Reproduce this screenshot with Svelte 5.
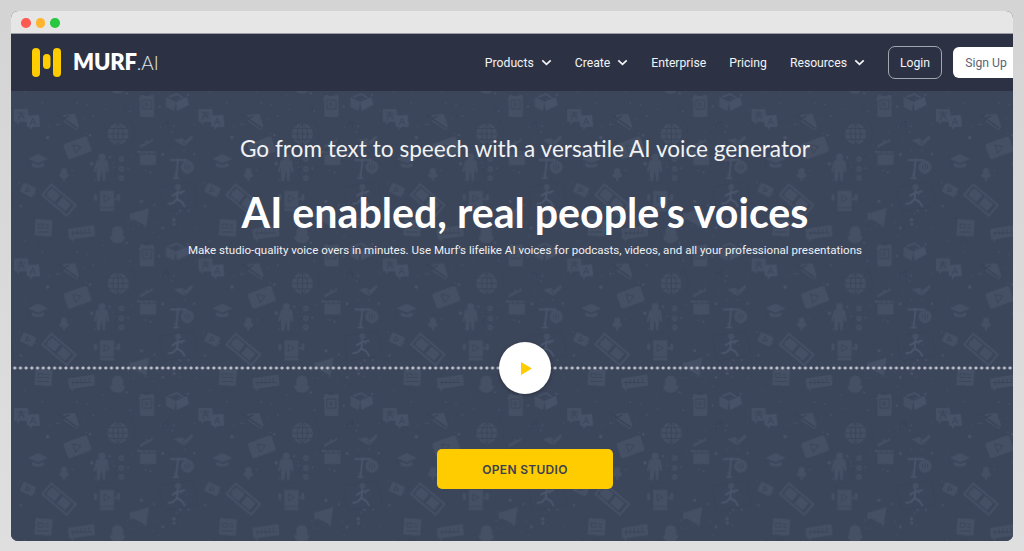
<script>
  const TW = 184.4;
  const TH = 149.5;
  const offsets = [[0, 0], [-TW, 0], [0, -TH], [-TW, -TH]];
  // pseudo random scatter of specks across the tile
  const specks = [];
  let s = 7;
  const rnd = () => ((s = (s * 16807) % 2147483647) / 2147483647);
  for (let i = 0; i < 95; i++) {
    specks.push({ x: +(rnd() * TW).toFixed(1), y: +(rnd() * TH).toFixed(1), r: +(0.5 + rnd() * rnd() * 1.3).toFixed(2) });
  }
  const navItems = [
    { label: 'Products', caret: true },
    { label: 'Create', caret: true },
    { label: 'Enterprise', caret: false },
    { label: 'Pricing', caret: false },
    { label: 'Resources', caret: true }
  ];
</script>

<div class="page">
  <div class="window">
    <div class="chrome">
      <span class="dot red"></span>
      <span class="dot amber"></span>
      <span class="dot green"></span>
    </div>

    <header class="header">
      <div class="logo">
        <svg class="mark" width="29" height="29" viewBox="0 0 29 29" aria-hidden="true">
          <rect class="mark-bar" x="0" y="0" width="8" height="29" rx="4" />
          <rect class="mark-bar" x="11" y="6" width="7.5" height="15" rx="3.7" />
          <rect class="mark-bar" x="21" y="0" width="8" height="29" rx="4" />
        </svg>
        <span class="wordmark"><b>MURF</b><i>.AI</i></span>
      </div>
      <nav class="nav">
        {#each navItems as item}
          <a class="nav-item" href="#top">
            {item.label}
            {#if item.caret}
              <svg class="caret" width="11" height="7" viewBox="0 0 11 7" aria-hidden="true">
                <path d="M1.3 1.3 5.500 5.300 9.700 1.300" />
              </svg>
            {/if}
          </a>
        {/each}
        <button class="login">Login</button>
        <button class="signup">Sign Up</button>
      </nav>
    </header>

    <main class="hero">
      <svg class="pattern" width="100%" height="100%" aria-hidden="true">
        <defs>
          <g id="tile">
            {#each specks as d}
              <circle class="speck" cx={d.x} cy={d.y} r={d.r} />
            {/each}

            <!-- translate bubbles -->
            <path class="ic" d="M3 18h13a1 1 0 0 1 1 1l1 11a1 1 0 0 1-1 1H9l-3 3v-3H4a1 1 0 0 1-1-1z" />
            <path class="ln" d="M6 22h8M10 20v2M7 29l3-7 3 6M7 25h6" />
            <path class="ic2" d="M15 25l12-1a1 1 0 0 1 1 1l1 10a1 1 0 0 1-1 1h-6l-3 3v-3h-2a1 1 0 0 1-1-1z" />
            <path class="ln" d="M19 34l3-7 3 7M20 31.500h4" />

            <!-- pen and pad -->
            <path class="ic" d="M52 24l12-1 4 12-2 4-13-8z" />
            <path class="ln thick" d="M46 23l20 14M53 27l5-2" />

            <!-- video card -->
            <g transform="rotate(-20 66 57)">
              <rect class="ic" x="54" y="49" width="25" height="16" rx="2" />
              <path class="ln" d="M63 52.500l7 4.500-7 4.500z" />
            </g>

            <!-- graduation cap -->
            <path class="ic" d="M17 68l10-5 10 5-10 4z" />
            <path class="ic" d="M21 72l6 2 6-2v3c-2 2-10 2-12 0z" />
            <path class="ln" d="M17 68v9" />

            <!-- small mic -->
            <rect class="ic" x="50" y="77" width="6" height="9" rx="3" />
            <path class="ic" d="M48 83h10c0 3-2 4-4 4v3h-2v-3c-2 0-4-1-4-4z" />

            <!-- small video -->
            <g transform="rotate(25 17 99)">
              <rect class="ic" x="10" y="94" width="14" height="10" rx="1.500" />
              <path class="ln" d="M15 96.500l4 2.500-4 2.500z" />
            </g>

            <!-- film strip -->
            <g transform="rotate(40 48 109)">
              <rect class="film" x="32" y="102" width="32" height="14" />
              <rect class="ic" x="35" y="104.500" width="11" height="9" />
              <rect class="ic" x="49" y="104.500" width="11" height="9" />
            </g>

            <!-- headphone book -->
            <path class="ln" d="M85 104c0-16 22-16 22 0" />
            <rect class="ic" x="83" y="103" width="3" height="7" rx="1.500" />
            <rect class="ic" x="106" y="103" width="3" height="7" rx="1.500" />
            <rect class="ic" x="89" y="100" width="14" height="16" rx="1" />
            <rect class="ic" x="89" y="117" width="14" height="3" />
            <path class="ln" d="M93 104l6 3.500-6 3.500z" />

            <!-- runner on screen -->
            <g transform="rotate(-10 167 106)">
              <rect class="ln" x="150" y="93" width="35" height="25" rx="1" />
            </g>
            <circle class="ic" cx="167" cy="96" r="3" />
            <path class="limb" d="M167 99l-1 9M166 102l8-2M166 102l-5 3M166 108l5 3 3 5M166 108l-4 4-5 1" />

            <!-- megaphone -->
            <path class="ic" d="M122 122l16-5-3 18-13-7z" />
            <rect class="ic" x="119" y="122" width="3" height="7" />

            <!-- presentation board -->
            <rect class="ic" x="24" y="128" width="17" height="17" transform="rotate(4 32 137)" />
            <path class="ln" d="M22 127l20 2M27 133h5v4h-5zM34 134h4M34 137h4M26 141h12M31 146l-4 8M33 146l3 8" />

            <!-- waveform bubble -->
            <path class="ic" d="M57 138l26-4 1 11-21 3-2 3-1-3h-2z" />
            <path class="ln" d="M62 140v5M66 139v5M70 138v6M74 138v5M78 137v4M60 142h21" />

            <!-- large mic -->
            <rect class="ic" x="101" y="135" width="11" height="14" rx="5.500" />
            <path class="ic" d="M99 145h15c0 4-3 7-6 7h-3c-3 0-6-3-6-7z" />

            <!-- phone -->
            <rect class="ic" x="129" y="4" width="14" height="22" rx="1.500" />
            <path class="ln" d="M133 2.500h6v2h-6z" />
            <rect class="ln" x="131.500" y="9" width="9" height="9" />
            <path class="ln" d="M134.500 11.500l3 2-3 2z" />

            <!-- book blocks -->
            <path class="thick2" d="M158 6l8-3 6 4" />
            <path class="ic" d="M155 6l10 5-2 9-8-4z" />
            <path class="ic2" d="M165 11l11-5 2 8-12 6z" />

            <!-- pin and note -->
            <path class="ln" d="M115 14c-3 0-3 4 0 7 3-3 3-7 0-7z" />
            <path class="ln thick" d="M151 35l6-5M157 30v7M151 35v4" />

            <!-- globe -->
            <circle class="ic" cx="107" cy="43" r="10.500" />
            <path class="ln globe" d="M96.500 43h21M98 37.500h18M98 48.500h18M107 32.500v21M107 32.500c-7 6-7 15 0 21M107 32.500c7 6 7 15 0 21" />
            <path class="ln" d="M120 30c6 10 5 20-3 27M118 31l2-2 1 3" />

            <!-- person and options -->
            <circle class="ic" cx="91" cy="66" r="3.500" />
            <path class="ic" d="M85 71c0-2 2-2 3-2h6c2 0 3 1 3 3l1 9h-2l-1-5-1 14h-2l-1-9h-1l-1 9h-3l-.5-14-1 5h-2z" />
            <path class="ln" d="M107 68c-3 0-3 2-3 4v12c0 2 1 3 3 3M104 78h3" />
            <circle class="ic dark-ring" cx="110.500" cy="68" r="3.200" />
            <circle class="ic dark-ring" cx="110.500" cy="78" r="3.200" />
            <circle class="ic dark-ring" cx="110.500" cy="87" r="3.200" />
            <path class="ln" d="M109 68h3M109 78h3M109 87h3" />

            <!-- clapper -->
            <path class="ic" d="M129 54l11-5 1-2 1 3-13 7z" />
            <rect class="ic" x="129" y="60" width="16" height="14" />
            <path class="ln" d="M129 59h16M129 63h16M132 60l2 3M137 60l2 3M142 60l2 3" />

            <!-- T with bubble -->
            <path class="t" d="M159 69h17M167 69l-2 18M162 87h6" />
            <circle class="ic" cx="176.500" cy="76" r="6.500" />
            <path class="ln" d="M174 74v4M176.500 72.500v7M179 74v4" />

            <!-- open book -->
            <path class="ic" d="M163 49l8-2 3 3 7-6 1 3-8 8-3-1z" />
            <path class="ln" d="M172 50l2 4" />
          </g>
          <pattern id="doodles" width={TW} height={TH} patternUnits="userSpaceOnUse">
            {#each offsets as o}
              <use href="#tile" x={o[0]} y={o[1]} />
            {/each}
            <use href="#tile" x={TW} y="0" />
            <use href="#tile" x="0" y={TH} />
          </pattern>
        </defs>
        <rect width="100%" height="100%" fill="url(#doodles)" />
      </svg>

      <h2 class="lead">Go from text to speech with a versatile AI voice generator</h2>
      <h1 class="title">AI enabled, real people's voices</h1>
      <p class="copy">Make studio-quality voice overs in minutes. Use Murf's lifelike AI voices for podcasts, videos, and all your professional presentations</p>

      <div class="player">
        <button class="play" aria-label="Play">
          <svg width="11" height="13" viewBox="0 0 11 13" aria-hidden="true"><path class="play-tri" d="M0 0 11 6.500 0 13z" /></svg>
        </button>
      </div>

      <button class="cta">OPEN STUDIO</button>
    </main>
  </div>
</div>

<style>
  :global(body) {
    margin: 0;
    overflow: hidden;
  }
  .page {
    height: 551px;
    box-sizing: border-box;
    padding: 11px 11px 10px;
    background: linear-gradient(#d4d4d4, #dfdfdf);
    font-family: "Roboto", "Inter", sans-serif;
  }
  .window {
    height: 100%;
    display: flex;
    flex-direction: column;
    border-radius: 7px;
    overflow: hidden;
    background: #3c4559;
  }
  .chrome {
    flex: 0 0 23px;
    box-sizing: border-box;
    padding: 7px 0 0 10px;
    display: flex;
    gap: 5px;
    background: #e6e6e6;
    border-bottom: 1px solid #9a9da3;
  }
  .dot {
    width: 9.500px;
    height: 9.500px;
    border-radius: 50%;
  }
  .red { background: #ff5a52; }
  .amber { background: #ffb52e; }
  .green { background: #27c83f; }

  .header {
    flex: 0 0 57px;
    display: flex;
    align-items: center;
    padding-left: 21px;
    background: #2c3244;
  }
  .logo {
    display: flex;
    align-items: center;
    gap: 12px;
    margin-top: -1px;
  }
  .mark-bar { fill: #ffcc00; }
  .wordmark {
    font-family: "Lato", sans-serif;
    color: #fff;
    line-height: 1;
  }
  .wordmark b { font-size: 22px; font-weight: 800; letter-spacing: -0.2px; }
  .wordmark i { font-size: 19px; font-style: normal; font-weight: 300; color: #e4e6ea; }

  .nav {
    margin-left: auto;
    margin-right: -6px;
    display: flex;
    align-items: center;
    gap: 23px;
  }
  .nav-item {
    display: flex;
    align-items: center;
    gap: 7px;
    color: #f2f3f5;
    font-size: 12.200px;
    text-decoration: none;
  }
  .caret path {
    fill: none;
    stroke: #f2f3f5;
    stroke-width: 1.800;
  }
  .login, .signup {
    font-family: inherit;
    font-size: 12.200px;
    cursor: pointer;
  }
  .login {
    width: 54px;
    height: 33px;
    border: 1px solid #a3a6ae;
    border-radius: 7px;
    background: transparent;
    color: #f2f3f5;
  }
  .signup {
    width: 66px;
    height: 31px;
    margin-left: -12px;
    border: 0;
    border-radius: 6px;
    background: #fff;
    color: #5c6376;
  }

  .hero {
    position: relative;
    flex: 1;
    display: flex;
    flex-direction: column;
    align-items: center;
    min-height: 0;
    padding-left: 26px;
    background: #3c465b;
  }
  .pattern {
    position: absolute;
    inset: 0;
    filter: blur(0.4px);
  }
  .speck { fill: #495269; }
  .ic { fill: #455065; }
  .ic2 { fill: #475167; }
  .ln {
    fill: none;
    stroke: #384257;
    stroke-width: 0.800;
  }
  .thick { stroke-width: 1.300; }
  .thick2 { fill: none; stroke: #455065; stroke-width: 2; }
  .film { fill: none; stroke: #455065; stroke-width: 2; }
  .globe { stroke-width: 0.900; }
  .limb { fill: none; stroke: #4c566c; stroke-width: 1.800; }
  .t { fill: none; stroke: #4a5369; stroke-width: 1.800; }
  .dark-ring { stroke: #384257; stroke-width: 0.600; }

  .lead, .title, .copy, .player, .cta {
    position: relative;
  }
  .lead {
    margin: 43px 0 0;
    font-family: "Lato", sans-serif;
    font-size: 22.600px;
    line-height: 30px;
    font-weight: 400;
    color: #f1f2f4;
  }
  .title {
    margin: 23px 0 0;
    font-family: "Lato", sans-serif;
    font-size: 41.150px;
    line-height: 50px;
    font-weight: 700;
    color: #fff;
  }
  .copy {
    margin: 5px 0 0;
    font-size: 11.550px;
    line-height: 16px;
    color: #eef0f3;
  }
  .player {
    align-self: stretch;
    margin-left: -26px;
    margin-top: 84px;
    height: 52px;
    padding-left: 26px;
    display: flex;
    justify-content: center;
    background: radial-gradient(circle at 2.800px 2px, #babec8 1.300px, transparent 1.800px) 1px 24px / 5.700px 4px repeat-x;
  }
  .play {
    width: 52px;
    height: 52px;
    padding: 0 0 0 2px;
    border: 0;
    border-radius: 50%;
    background: #fff;
    box-shadow: 0 1px 4px rgba(0, 0, 0, 0.3);
    display: flex;
    align-items: center;
    justify-content: center;
  }
  .play-tri { fill: #ffcc00; }
  .cta {
    margin-top: 55px;
    width: 176px;
    height: 40px;
    border: 0;
    border-radius: 5px;
    background: #ffcc00;
    color: #3b4052;
    font-family: "Inter", sans-serif;
    font-size: 12px;
    font-weight: 600;
    letter-spacing: 0.3px;
  }
</style>
